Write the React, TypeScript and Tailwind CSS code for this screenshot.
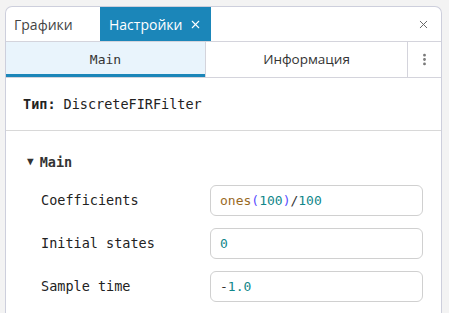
import { X, MoreVertical } from 'lucide-react';

const mono = { fontFamily: '"DejaVu Sans Mono", "Liberation Mono", monospace' };

function Field({ children }: { children: React.ReactNode }) {
  return (
    <div
      className="w-[213px] h-[31px] border border-[#d0d0d0] rounded-[6px] flex items-center px-[9px] text-[13px]"
      style={mono}
    >
      {children}
    </div>
  );
}

function Row({ label, children }: { label: string; children: React.ReactNode }) {
  return (
    <div className="flex items-center h-[43px]">
      <div className="w-[204px] pl-[35px] text-[13.5px] text-[#222]" style={mono}>
        {label}
      </div>
      <Field>{children}</Field>
    </div>
  );
}

export default function App() {
  return (
    <div
      className="w-[449px] h-[313px] bg-[#f3f3f3] pt-[6px] pl-[5px] pr-[7px] overflow-hidden"
      style={{ fontFamily: '"Open Sans", "Noto Sans", sans-serif' }}
    >
      <div className="h-full bg-white border border-b-0 border-[#cdcfdc] rounded-t-[7px] flex flex-col">
        {/* top tabs */}
        <div className="flex h-[35px] border-b border-[#d4d4dc]">
          <div className="w-[94px] flex items-center pl-[8px] text-[14px] text-[#444] rounded-tl-[7px]">
            Графики
          </div>
          <div className="w-[111px] bg-[#1b86b9] text-white flex items-center pl-[9px] gap-[7px] text-[14px]">
            Настройки
            <X className="w-[13px] h-[13px]" strokeWidth={2} />
          </div>
          <div className="flex-1" />
          <div className="w-[36px] flex items-center justify-center text-[#666]">
            <X className="w-[13px] h-[13px]" strokeWidth={1.8} />
          </div>
        </div>

        {/* sub tabs */}
        <div className="flex h-[36px] border-b border-[#d4d4dc]">
          <div
            className="w-[199px] bg-[#e9f4fc] border-b-[3px] border-[#1b86b9] flex items-center justify-center text-[13px] text-[#333] pt-[3px]"
            style={mono}
          >
            Main
          </div>
          <div className="w-[202px] border-l border-[#d4d4dc] flex items-center justify-center text-[13.5px] text-[#333]">
            Информация
          </div>
          <div className="flex-1 border-l border-[#d4d4dc] flex items-center justify-center text-[#777]">
            <MoreVertical className="w-[15px] h-[15px]" strokeWidth={2.5} />
          </div>
        </div>

        {/* type */}
        <div className="h-[53px] flex items-center pl-[17px] text-[13.5px] text-[#222] border-b border-[#d8d8d8]" style={mono}>
          <span className="font-bold">Тип:</span>
          <span className="ml-[8px]">DiscreteFIRFilter</span>
        </div>

        {/* main section */}
        <div className="pt-[22px]">
          <div className="flex items-center pl-[21px] h-[19px] text-[13.5px] text-[#333] font-bold" style={mono}>
            <span className="text-[11px] mr-[6px]">▼</span>
            Main
          </div>
          <div className="mt-[7px]">
            <Row label="Coefficients">
              <span className="text-[#9a6a1f]">ones</span>
              <span className="text-[#5a4dff]">(</span>
              <span className="text-[#12878a]">100</span>
              <span className="text-[#5a4dff]">)</span>
              <span className="text-[#333]">/</span>
              <span className="text-[#12878a]">100</span>
            </Row>
            <Row label="Initial states">
              <span className="text-[#12878a]">0</span>
            </Row>
            <Row label="Sample time">
              <span className="text-[#333]">-</span>
              <span className="text-[#12878a]">1.0</span>
            </Row>
          </div>
        </div>
      </div>
    </div>
  );
}
